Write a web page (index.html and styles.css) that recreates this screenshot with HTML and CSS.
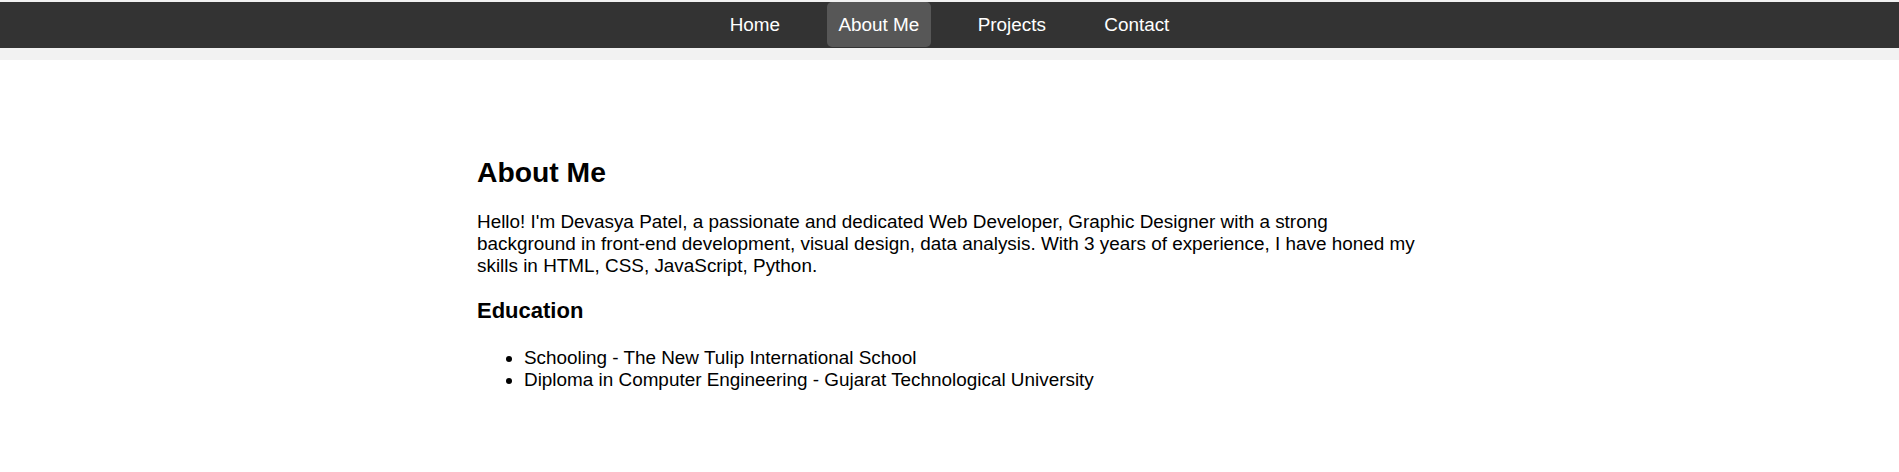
FILE: index.html
```html
<!DOCTYPE html>
<html lang="en">
<head>
<meta charset="utf-8">
<title>About Me</title>
<link rel="stylesheet" href="styles.css">
</head>
<body>
<header class="site-header">
  <nav class="nav">
    <a class="nav-link" href="#">Home</a>
    <a class="nav-link active" href="#">About Me</a>
    <a class="nav-link" href="#">Projects</a>
    <a class="nav-link" href="#">Contact</a>
  </nav>
</header>
<main class="content">
  <section class="about">
    <h2 class="title">About Me</h2>
    <p class="intro">Hello! I'm Devasya Patel, a passionate and dedicated Web Developer, Graphic Designer with a strong background in front-end development, visual design, data analysis. With 3 years of experience, I have honed my skills in HTML, CSS, JavaScript, Python.</p>
    <h3 class="subtitle">Education</h3>
    <ul class="list">
      <li>Schooling - The New Tulip International School</li>
      <li>Diploma in Computer Engineering - Gujarat Technological University</li>
    </ul>
  </section>
</main>
</body>
</html>
```
FILE: styles.css
```css
html, body {
  margin: 0;
  padding: 0;
}
body {
  background: #ffffff;
  font-family: "Liberation Sans", Arial, sans-serif;
  color: #000;
  font-size: 18.9px;
}
.site-header {
  background: #f2f2f2;
  padding: 2px 0 12px;
}
.nav {
  background: #333333;
  height: 46px;
  display: flex;
  justify-content: center;
  align-items: flex-start;
}
.nav-link {
  color: #ffffff;
  text-decoration: none;
  font-size: 18.9px;
  line-height: 21.5px;
  padding: 11.5px 11.7px;
  margin: 0 17.5px;
  border-radius: 5px;
}
.nav-link.active {
  background: #575757;
}
.content {
  padding-top: 73px;
  display: flex;
  justify-content: center;
}
.about {
  width: 945px;
}
.title {
  font-size: 28.3px;
  line-height: 32px;
  margin: 23px 0;
  font-weight: bold;
}
.intro {
  margin: 22px 0;
  line-height: 21.8px;
}
.subtitle {
  font-size: 22px;
  line-height: 25.5px;
  margin: 22px 0 23px;
  font-weight: bold;
}
.list {
  margin: 23px 0 22px;
  padding-left: 47px;
  line-height: 21.8px;
}
```
